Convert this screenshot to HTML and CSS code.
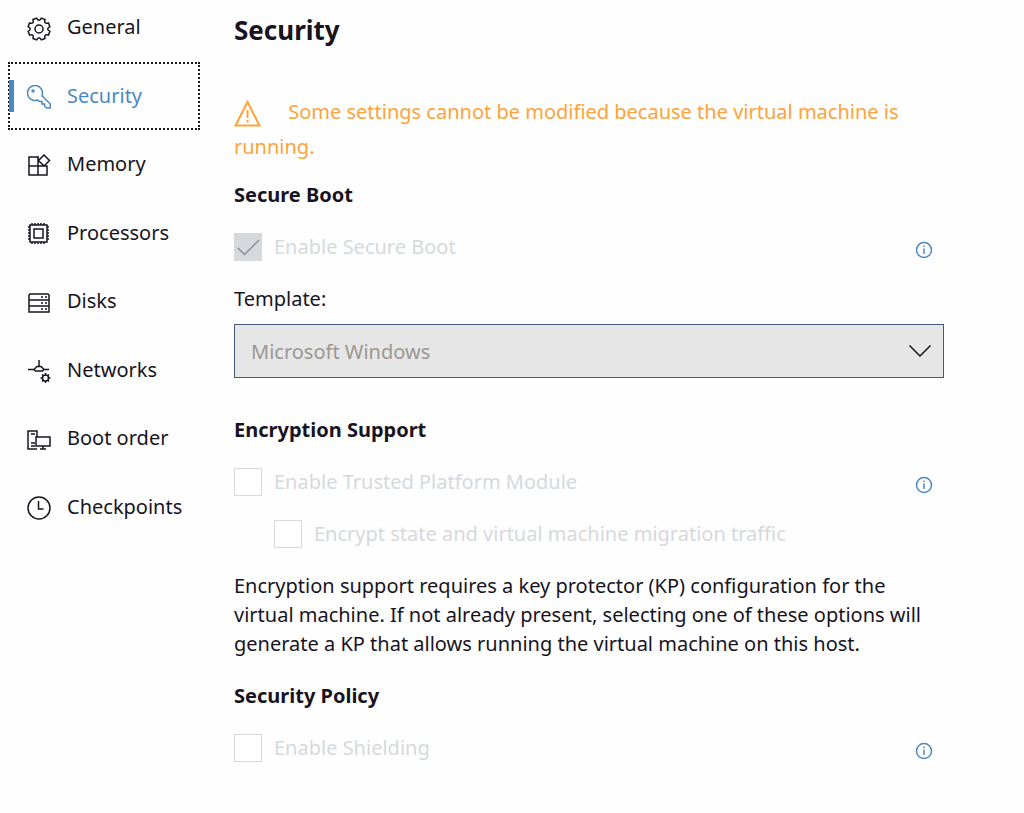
FILE: index.html
```html
<!DOCTYPE html>
<html lang="en">

<head>
  <meta charset="UTF-8" />
  <meta name="viewport" content="width=device-width, initial-scale=1" />
  <title>Security</title>
  <link rel="stylesheet" href="styles.css">
</head>

<body>

  <div class="settings">
    <nav class="sidebar">
      <a class="nav-item" href="#general">
        <svg class="nav-icon" viewBox="0 0 24 24">
          <path d="M14.4 1.1L18 2.55Q16.6 7.4 21.45 6L22.9 9.6Q18.5 12 22.9 14.4L21.45 18Q16.6 16.6 18 21.45L14.4 22.9Q12 18.5 9.6 22.9L6 21.45Q7.4 16.6 2.55 18L1.1 14.4Q5.5 12 1.1 9.6L2.55 6Q7.4 7.4 6 2.55L9.6 1.1Q12 5.5 14.4 1.1z" />
          <circle cx="12" cy="12" r="4" />
        </svg>
        <span>General</span>
      </a>
      <a class="nav-item active" href="#security">
        <svg class="nav-icon" viewBox="0 0 24 24">
          <path d="M15 10.700A7.500 7.500 0 1 0 10.700 15L12.500 16.600H15V19h2.500v2L19.800 23H23.200V19z" />
          <circle cx="6" cy="6" r="1" />
        </svg>
        <span>Security</span>
      </a>
      <a class="nav-item" href="#memory">
        <svg class="nav-icon" viewBox="0 0 24 24">
          <path d="M12 3H2v18h18v-9H2M11 3v18M20 12h-9M17 1l5.500 5.500L17 12l-5.500-5.500z" />
        </svg>
        <span>Memory</span>
      </a>
      <a class="nav-item" href="#processors">
        <svg class="nav-icon" viewBox="0 0 24 24">
          <rect x="3" y="3" width="17" height="17" />
          <rect x="7" y="7" width="9" height="9" />
          <path d="M5 1v2M8 1v2M11 1v2M14 1v2M17 1v2M5 20v2M8 20v2M11 20v2M14 20v2M17 20v2M1 5h2M1 8h2M1 11h2M1 14h2M1 17h2M20 5h2M20 8h2M20 11h2M20 14h2M20 17h2" />
        </svg>
        <span>Processors</span>
      </a>
      <a class="nav-item" href="#disks">
        <svg class="nav-icon" viewBox="0 0 24 24">
          <path d="M3 3h18l1 1v17H2V4zM2 9h20M2 15h20M14 6h2M18 6h2M14 12h2M18 12h2M14 18h2M18 18h2" />
        </svg>
        <span>Disks</span>
      </a>
      <a class="nav-item" href="#networks">
        <svg class="nav-icon" viewBox="0 0 24 24">
          <path d="M12 1v6M1 10.500h6M17 10.500h5M10 7.500h4l3 3-1.500 1.500h-7L7 10.500z" />
          <circle cx="18.500" cy="19" r="3" />
          <path d="M18.500 14v2M18.500 22v2M13.500 19h2M21.500 19h2M15 15.500l1.300 1.300M20.700 21.200l1.300 1.300M22 15.500l-1.300 1.300M16.300 21.200L15 22.500" />
        </svg>
        <span>Networks</span>
      </a>
      <a class="nav-item" href="#boot-order">
        <svg class="nav-icon" viewBox="0 0 24 24">
          <path d="M10 9V3H1v18h9M4 6h4M4 15h4M4 18h4M9 9h14v9H9zM16 18v3M13 21h6" />
        </svg>
        <span>Boot order</span>
      </a>
      <a class="nav-item" href="#checkpoints">
        <svg class="nav-icon" viewBox="0 0 24 24">
          <circle cx="12" cy="12" r="11" />
          <path d="M11.500 5v8h5" />
        </svg>
        <span>Checkpoints</span>
      </a>
    </nav>

    <main class="content">
      <h1>Security</h1>

      <p class="warning">
        <svg class="warning-icon" viewBox="0 0 27 27">
          <path d="M13.500 2L25.500 25.500H1.500zM13.500 10v8M13.500 20v2.500" />
        </svg>
        Some settings cannot be modified because the virtual machine is running.
      </p>

      <section>
        <h2>Secure Boot</h2>
        <div class="option">
          <label class="check">
            <span class="box">
              <input type="checkbox" checked disabled>
              <svg class="tick" viewBox="0 0 28 28"><path d="M4 15l6.500 6.500L25 7" /></svg>
            </span>
            Enable Secure Boot
          </label>
          <svg class="info" viewBox="0 0 18 18"><circle cx="9" cy="9" r="7.500" /><path d="M9 7.500V13M9 4.500v1.500" /></svg>
        </div>
        <label class="field-label" for="template">Template:</label>
        <div class="select-wrap">
          <select id="template" disabled>
            <option>Microsoft Windows</option>
          </select>
          <svg class="chevron" viewBox="0 0 24 14"><path d="M1.500 1.500L12 12 22.500 1.500" /></svg>
        </div>
      </section>

      <section>
        <h2>Encryption Support</h2>
        <div class="option">
          <label class="check">
            <span class="box"><input type="checkbox" disabled></span>
            Enable Trusted Platform Module
          </label>
          <svg class="info" viewBox="0 0 18 18"><circle cx="9" cy="9" r="7.500" /><path d="M9 7.500V13M9 4.500v1.500" /></svg>
        </div>
        <div class="option nested">
          <label class="check">
            <span class="box"><input type="checkbox" disabled></span>
            Encrypt state and virtual machine migration traffic
          </label>
        </div>
        <p class="note">Encryption support requires a key protector (KP) configuration for the virtual machine. If not already present, selecting one of these options will generate a KP that allows running the virtual machine on this host.</p>
      </section>

      <section>
        <h2>Security Policy</h2>
        <div class="option">
          <label class="check">
            <span class="box"><input type="checkbox" disabled></span>
            Enable Shielding
          </label>
          <svg class="info" viewBox="0 0 18 18"><circle cx="9" cy="9" r="7.500" /><path d="M9 7.500V13M9 4.500v1.500" /></svg>
        </div>
      </section>
    </main>
  </div>

</body>
</html>
```

FILE: styles.css
```css
* {
  box-sizing: border-box;
}

body {
  margin: 0;
  background: #fefefe;
  color: #17141f;
  font-family: "Noto Sans", "Open Sans", sans-serif;
  font-size: 20px;
  line-height: 28px;
}

h1,
h2,
p {
  margin: 0;
}

svg {
  fill: none;
  stroke: currentColor;
  stroke-width: 1.5;
}

.settings {
  display: flex;
  align-items: flex-start;
}

.sidebar {
  display: grid;
  grid-auto-rows: 1fr;
  flex: 0 0 192px;
  height: 548px;
  margin: -7px 34px 0 8px;
}

.nav-item {
  display: flex;
  align-items: center;
  gap: 16px;
  padding-left: 19px;
  color: inherit;
  text-decoration: none;
}

.nav-icon {
  width: 24px;
  height: 24px;
  margin-top: 3px;
}

.nav-item.active {
  position: relative;
  color: #4c88c2;
  outline: 2px dotted #17141f;
  outline-offset: -2px;
}

.nav-item.active::before {
  content: "";
  position: absolute;
  left: 1px;
  top: 18px;
  width: 5px;
  height: 32px;
  background: #4c88c2;
}

.content {
  flex: 1;
  min-width: 0;
  padding: 12px 80px 24px 0;
}

h1 {
  font-size: 26px;
  line-height: 36px;
  margin-bottom: 46px;
}

h2 {
  font-size: 20px;
  line-height: 28px;
  margin-bottom: 24px;
}

section {
  margin-bottom: 38px;
}

section:last-child {
  margin-bottom: 0;
}

.warning {
  color: #ffa339;
  line-height: 35px;
  margin-bottom: 17px;
}

.warning-icon {
  width: 27px;
  height: 27px;
  margin-right: 22px;
  vertical-align: -8px;
  stroke-width: 2;
}

.option {
  display: flex;
  align-items: center;
  justify-content: space-between;
  padding-right: 11px;
}

.check {
  display: flex;
  align-items: center;
  gap: 12px;
  color: #d5d9dd;
}

.box {
  position: relative;
  flex: none;
  width: 28px;
  height: 28px;
}

.box input {
  appearance: none;
  display: block;
  width: 28px;
  height: 28px;
  margin: 0;
  border: 1px solid #d5d9dd;
  background: #fff;
}

.box input:checked {
  background: #d5d9dd;
}

.tick {
  position: absolute;
  inset: 0;
  color: #8a8f96;
}

.info {
  width: 18px;
  height: 18px;
  margin-top: 6px;
  color: #4c88c2;
}

.field-label {
  display: block;
  margin: 24px 0 11px;
}

.select-wrap {
  position: relative;
}

select {
  appearance: none;
  display: block;
  width: 100%;
  height: 54px;
  padding: 2px 48px 0 16px;
  border: 1px solid #44597a;
  border-radius: 0;
  background: #e6e6e6;
  color: #9b9792;
  font: inherit;
  opacity: 1;
}

.chevron {
  position: absolute;
  right: 12px;
  top: 20px;
  width: 24px;
  height: 14px;
}

.nested {
  margin-top: 24px;
  padding-left: 40px;
}

.note {
  margin: 23px 0 -14px;
  line-height: 29px;
}
```
